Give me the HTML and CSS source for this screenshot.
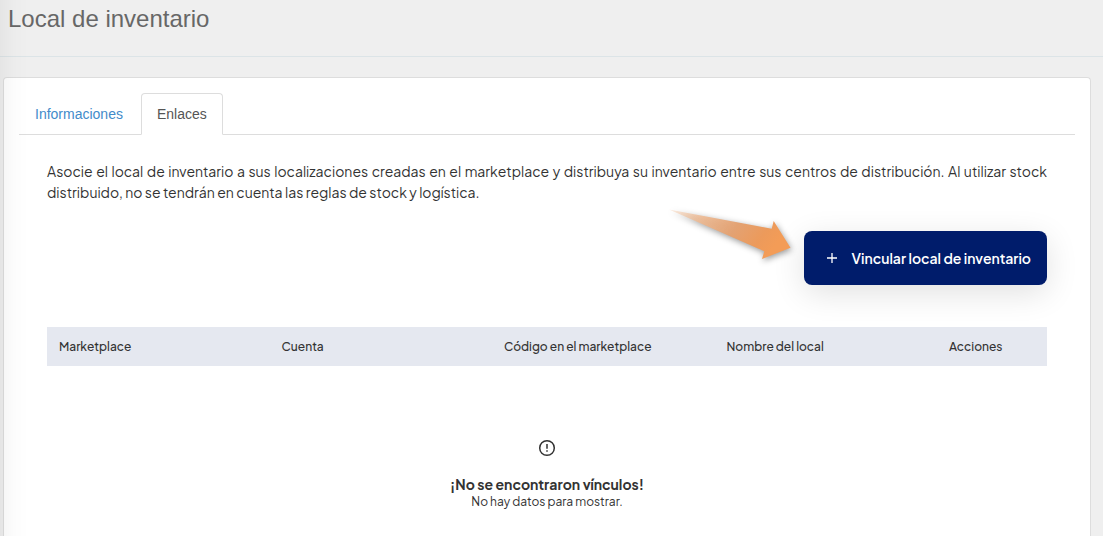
FILE: index.html
```
<!DOCTYPE html>
<html lang="es">
<head>
    <meta charset="UTF-8">
    <meta name="viewport" content="width=device-width, initial-scale=1.0">
    <title>Local de inventario</title>
    <link rel="stylesheet" href="styles.css">
</head>
<body>

    <header class="page-header">
        <h1>Local de inventario</h1>
    </header>

    <main class="panel">
        <nav class="tabs">
            <a href="#" class="tab">Informaciones</a>
            <a href="#" class="tab active">Enlaces</a>
        </nav>

        <section class="content">
            <p class="intro">Asocie el local de inventario a sus localizaciones creadas en el marketplace y distribuya su inventario entre sus centros de distribución. Al utilizar stock distribuido, no se tendrán en cuenta las reglas de stock y logística.</p>

            <div class="actions">
                <!-- Arrow pointing at the button -->
                <svg class="arrow" width="136" height="60" viewBox="0 0 136 60" aria-hidden="true">
                    <defs>
                        <linearGradient id="arrow-fill" x1="0" y1="0" x2="1" y2="0.3">
                            <stop offset="0" stop-color="#f5c8a5" stop-opacity="0.3"/>
                            <stop offset="0.3" stop-color="#eeb991" stop-opacity="0.9"/>
                            <stop offset="0.6" stop-color="#e3a273"/>
                            <stop offset="0.85" stop-color="#ec9a5b"/>
                            <stop offset="1" stop-color="#f39c57"/>
                        </linearGradient>
                    </defs>
                    <path d="M1 4.500L103.700 23.700L105.700 16L122.500 42.700L94 54L96.300 46.300Z" fill="url(#arrow-fill)"/>
                </svg>
                <button type="button" class="btn">
                    <svg width="12" height="12" viewBox="0 0 12 12" aria-hidden="true">
                        <path d="M6 1v10M1 6h10" stroke="#fff" stroke-width="1.300" fill="none"/>
                    </svg>
                    Vincular local de inventario
                </button>
            </div>

            <table class="links-table">
                <thead>
                    <tr>
                        <th>Marketplace</th>
                        <th>Cuenta</th>
                        <th>Código en el marketplace</th>
                        <th>Nombre del local</th>
                        <th class="col-actions">Acciones</th>
                    </tr>
                </thead>
            </table>

            <div class="empty">
                <svg width="18" height="18" viewBox="0 0 18 18" aria-hidden="true">
                    <circle cx="9" cy="9" r="7.300" fill="none" stroke="#333" stroke-width="1.500"/>
                    <path d="M9 5v4.800M9 11.300v1.500" stroke="#333" stroke-width="1.500"/>
                </svg>
                <strong>¡No se encontraron vínculos!</strong>
                <span>No hay datos para mostrar.</span>
            </div>
        </section>
    </main>

</body>
</html>
```
FILE: styles.css
```
* {
    box-sizing: border-box;
}

body {
    margin: 0;
    min-height: 100vh;
    display: flex;
    flex-direction: column;
    background-color: #efefef;
    color: #333;
    font-family: "Liberation Sans", Arial, sans-serif;
    font-size: 14px;
}

/* soft shadow along the left edge */
body::before {
    content: "";
    position: fixed;
    top: 0;
    bottom: 0;
    left: 0;
    width: 28px;
    background: linear-gradient(to right, rgba(0, 0, 0, 0.04), rgba(0, 0, 0, 0.01) 50%, rgba(0, 0, 0, 0));
    pointer-events: none;
}

.page-header {
    height: 57px;
    padding: 4px 8px;
    border-bottom: 1px solid #dce4e7;
}

.page-header h1 {
    margin: 0;
    font-size: 24px;
    line-height: 30px;
    font-weight: normal;
    color: #676767;
}

.panel {
    flex: 1;
    margin: 20px 12px 0 3px;
    padding: 15px 15px 0;
    background-color: #fff;
    border: 1px solid #ddd;
    border-bottom: none;
    border-radius: 4px 4px 0 0;
}

.tabs {
    display: flex;
    border-bottom: 1px solid #ddd;
}

.tab {
    margin-bottom: -1px;
    padding: 10px 15px;
    border: 1px solid transparent;
    border-radius: 4px 4px 0 0;
    line-height: 20px;
    color: #428bca;
    text-decoration: none;
}

.tab.active {
    margin-left: 2px;
    background-color: #fff;
    border-color: #ddd;
    border-bottom-color: #fff;
    color: #555;
}

.content {
    padding: 26px 28px;
    font-family: "Plus Jakarta Sans", Inter, sans-serif;
}

.intro {
    margin: 0;
    line-height: 21px;
    text-align: justify;
}

.actions {
    position: relative;
    display: flex;
    justify-content: flex-end;
    margin: 28px 0 42px;
}

.arrow {
    position: absolute;
    right: 243px;
    top: -26px;
    filter: drop-shadow(1px 2px 3px rgba(0, 0, 0, 0.4));
}

.btn {
    display: flex;
    align-items: center;
    gap: 14px;
    height: 54px;
    padding: 0 16px 0 22px;
    background-color: #001c6b;
    border: none;
    border-radius: 8px;
    box-shadow: 0 8px 32px rgba(0, 0, 0, 0.12);
    color: #fff;
    font-family: inherit;
    font-size: 14px;
    font-weight: 600;
    cursor: pointer;
}

.links-table {
    width: 100%;
    border-collapse: collapse;
    table-layout: fixed;
}

.links-table th {
    height: 39px;
    padding: 0 12px;
    background-color: #e5e8f0;
    font-size: 12px;
    font-weight: 500;
    text-align: left;
}

.links-table .col-actions {
    width: 11%;
}

.empty {
    display: flex;
    flex-direction: column;
    align-items: center;
    padding-top: 73px;
    font-size: 12px;
    line-height: 16px;
}

.empty strong {
    margin-top: 18px;
    margin-bottom: 1px;
    font-size: 14px;
    line-height: 18px;
    font-weight: 700;
}
```
